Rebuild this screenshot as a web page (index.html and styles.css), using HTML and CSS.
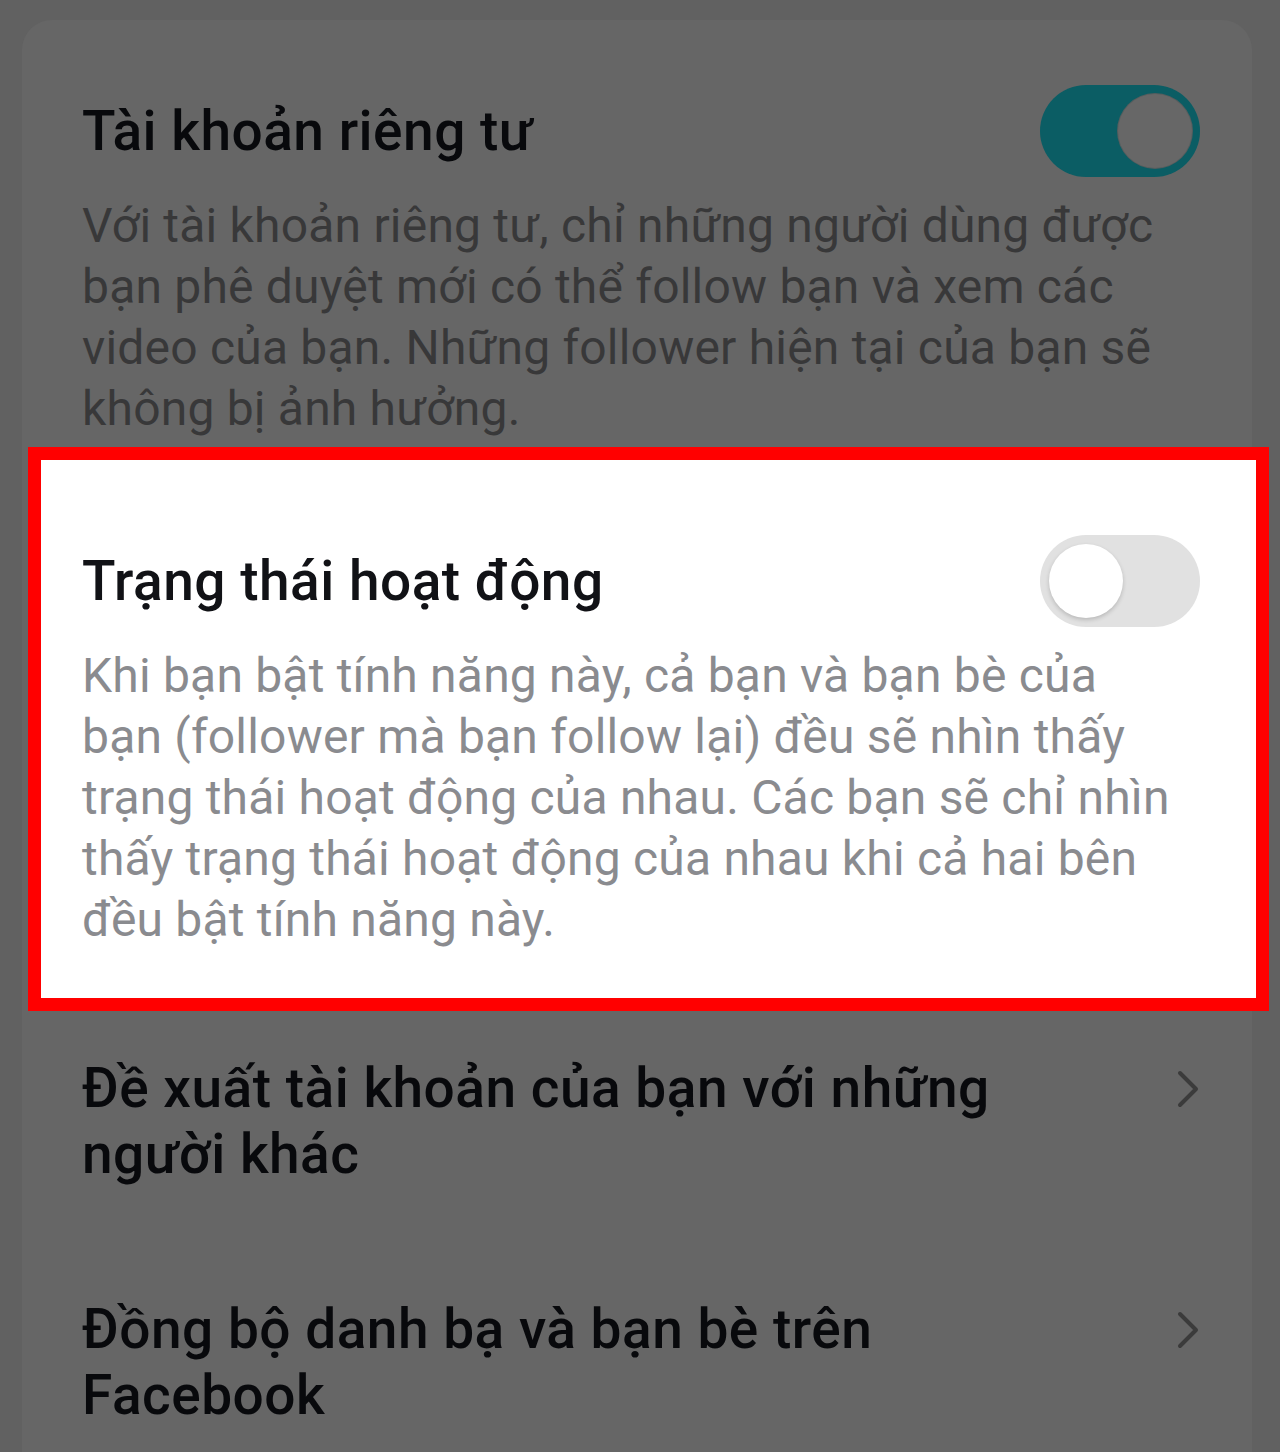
FILE: index.html
```html
<!DOCTYPE html>
<html lang="vi">
<head>
<meta charset="utf-8">
<title>Quyền riêng tư</title>
<link rel="stylesheet" href="styles.css">
</head>
<body>
<div class="card">
  <section class="setting">
    <div class="row">
      <h2 class="title">Tài khoản riêng tư</h2>
      <span class="toggle toggle-on"><span class="knob"></span></span>
    </div>
    <p class="desc">Với tài khoản riêng tư, chỉ những người dùng được bạn phê duyệt mới có thể follow bạn và xem các video của bạn. Những follower hiện tại của bạn sẽ không bị ảnh hưởng.</p>
  </section>

  <section class="setting highlight">
    <div class="row">
      <h2 class="title">Trạng thái hoạt động</h2>
      <span class="toggle toggle-off"><span class="knob"></span></span>
    </div>
    <p class="desc">Khi bạn bật tính năng này, cả bạn và bạn bè của bạn (follower mà bạn follow lại) đều sẽ nhìn thấy trạng thái hoạt động của nhau. Các bạn sẽ chỉ nhìn thấy trạng thái hoạt động của nhau khi cả hai bên đều bật tính năng này.</p>
  </section>

  <a class="item" href="#">
    <span class="title item-title">Đề xuất tài khoản của bạn với những người khác</span>
    <svg class="chev" viewBox="0 0 24 40" width="24" height="40"><path d="M4 4 L20 20 L4 36" fill="none" stroke="#3b3b3b" stroke-width="4" stroke-linecap="round" stroke-linejoin="round"/></svg>
  </a>

  <a class="item" href="#">
    <span class="title item-title">Đồng bộ danh bạ và bạn bè trên Facebook</span>
    <svg class="chev" viewBox="0 0 24 40" width="24" height="40"><path d="M4 4 L20 20 L4 36" fill="none" stroke="#3b3b3b" stroke-width="4" stroke-linecap="round" stroke-linejoin="round"/></svg>
  </a>
</div>
</body>
</html>
```

FILE: styles.css
```css
html, body {
  margin: 0;
  padding: 0;
}
body {
  background: #616161;
  font-family: Roboto, "Noto Sans", "Liberation Sans", sans-serif;
  height: 1452px;
  overflow: hidden;
}
.card {
  margin: 20px 28px 0 22px;
  background: #666666;
  border-radius: 30px 30px 0 0;
  min-height: 1432px;
}
.setting {
  padding: 65px 52px 8px 60px;
}
.row {
  display: flex;
  align-items: center;
  justify-content: space-between;
}
.title {
  margin: 0;
  font-size: 55px;
  font-weight: 500;
  line-height: 66px;
  color: #08090c;
  letter-spacing: 0.5px;
}
.desc {
  margin: 18px 0 0;
  font-size: 48px;
  font-weight: 400;
  line-height: 61px;
  color: #383839;
  letter-spacing: 0.2px;
}
.toggle {
  flex: none;
  width: 160px;
  height: 92px;
  border-radius: 46px;
  display: flex;
  align-items: center;
  box-sizing: border-box;
}
.toggle-on {
  background: #0b5d64;
  justify-content: flex-end;
  padding-right: 8px;
}
.toggle-on .knob {
  width: 74px;
  height: 74px;
  border-radius: 50%;
  background: #676767;
  box-shadow: 0 0 0 1px #555d5e;
}
.toggle-off {
  background: #e1e1e1;
  justify-content: flex-start;
  padding-left: 9px;
}
.toggle-off .knob {
  width: 74px;
  height: 74px;
  border-radius: 50%;
  background: #ffffff;
  box-shadow: 0 2px 4px rgba(0, 0, 0, 0.18);
}
.highlight {
  margin: 0 -17px 0 6px;
  border: 13px solid #ff0000;
  background: #ffffff;
  padding: 75px 56px 48px 41px;
}
.highlight .title {
  color: #111216;
}
.highlight .desc {
  color: #8a8b8f;
  padding-right: 18px;
}
.item {
  display: flex;
  align-items: flex-start;
  justify-content: space-between;
  padding: 44px 52px 65px 60px;
  text-decoration: none;
}
.item-title {
  display: block;
  max-width: 1000px;
}
.chev {
  flex: none;
  margin-top: 14px;
}
```
